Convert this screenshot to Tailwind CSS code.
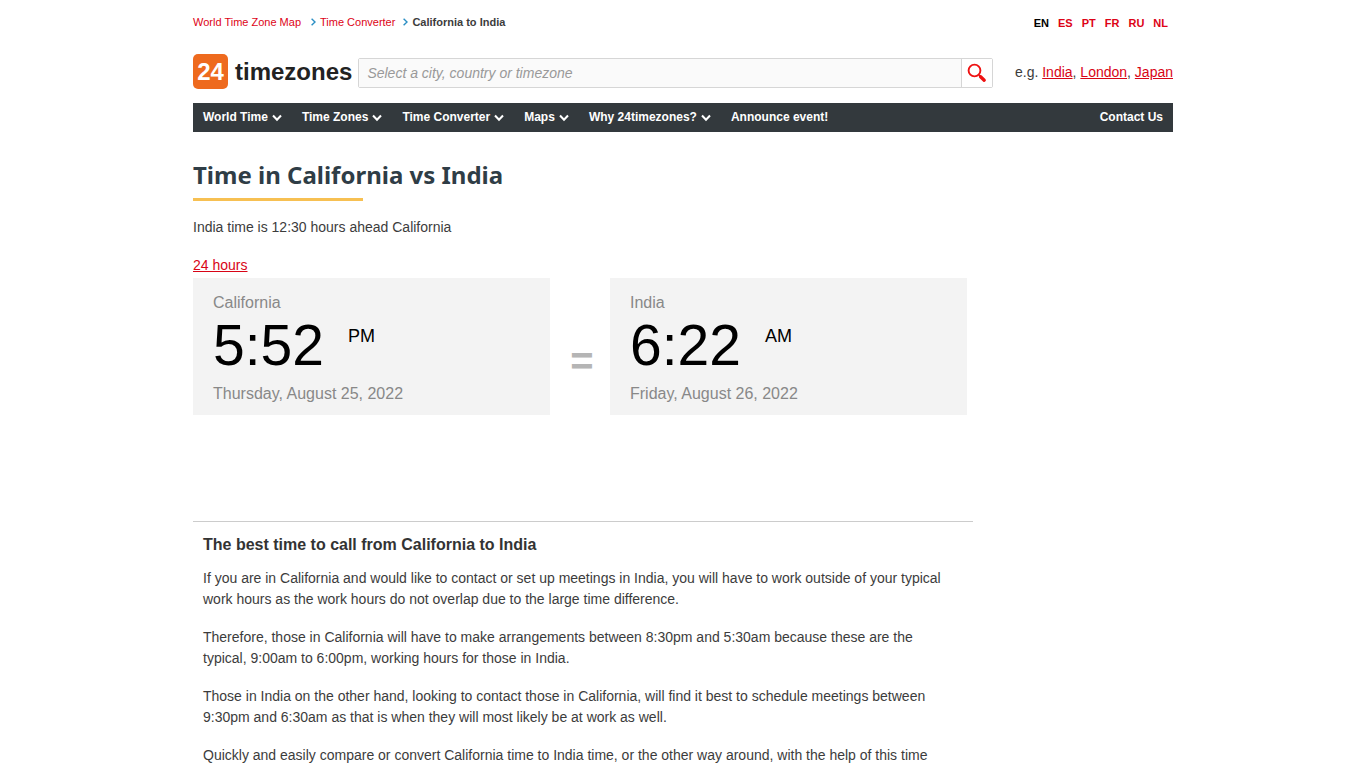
<!DOCTYPE html>
<html lang="en">
<head>
<meta charset="utf-8">
<meta name="viewport" content="width=device-width, initial-scale=1">
<title>Time in California vs India</title>
<script src="https://cdn.jsdelivr.net/npm/@tailwindcss/browser@4"></script>
</head>
<body class="bg-white font-['Liberation_Sans',Arial,sans-serif] text-sm leading-[21px] text-[#3c3c3c]">
<div class="mx-auto max-w-[980px]">
  <header>
    <div class="flex h-11 items-center justify-between">
      <nav aria-label="Breadcrumb" class="flex items-center text-[11px]">
        <a href="#" class="text-[#dd0316]">World Time Zone Map</a>
        <svg class="mr-1 ml-2.5 h-2 w-[5px]" viewBox="0 0 5 8" fill="none" stroke="#2b8fc4" stroke-width="1.4"><path d="M0.6 0.8 4 4 0.6 7.2"/></svg>
        <a href="#" class="text-[#dd0316]">Time Converter</a>
        <svg class="mr-1 ml-2 h-2 w-[5px]" viewBox="0 0 5 8" fill="none" stroke="#2b8fc4" stroke-width="1.4"><path d="M0.6 0.8 4 4 0.6 7.2"/></svg>
        <span class="font-bold text-[#3c3c3c]">California to India</span>
      </nav>
      <nav aria-label="Language" class="flex gap-[9px] pt-0.5 pr-[5px] text-[11px] font-bold text-[#dd0316]">
        <a href="#" class="text-black">EN</a><a href="#">ES</a><a href="#">PT</a><a href="#">FR</a><a href="#">RU</a><a href="#">NL</a>
      </nav>
    </div>
    <div class="flex h-[59px] items-center pb-0.5">
      <a href="#" class="flex items-center gap-[7px] pb-0.5 text-2xl font-bold text-[#222]">
        <span class="flex size-[35px] items-center justify-center rounded-[5px] bg-[#ee6a1e] text-white">24</span>
        <span>timezones</span>
      </a>
      <form class="ml-1.5 flex h-[30px] flex-1 rounded-xs border border-[#d6d6d6]">
        <input type="text" aria-label="City, country or timezone" placeholder="Select a city, country or timezone" class="min-w-0 flex-1 bg-[#fafafa] px-2 pt-0.5 italic outline-none placeholder:text-[#999]">
        <button type="button" aria-label="Search" class="flex w-[31px] items-center justify-center border-l border-[#d6d6d6] bg-white">
          <svg class="size-5" viewBox="0 0 20 20" fill="none" stroke="#ee1111"><circle cx="7.5" cy="7.5" r="5.9" stroke-width="1.9"/><path d="M12 12l2 2" stroke-width="2"/><path d="M13.6 13.8l3.6 3.4" stroke-width="3.4" stroke-linecap="round"/></svg>
        </button>
      </form>
      <p class="ml-[22px]">e.g. <a href="#" class="text-[#d80416] underline">India</a>, <a href="#" class="text-[#d80416] underline">London</a>, <a href="#" class="text-[#d80416] underline">Japan</a></p>
    </div>
    <nav aria-label="Main" class="flex h-[29px] items-center gap-5 bg-[#33393d] px-2.5 pb-0.5 text-xs font-bold text-white">
      <a href="#" class="flex items-center gap-1">World Time <svg class="mt-0.5 h-2 w-2.5" viewBox="0 0 10 8" fill="none" stroke="white" stroke-width="2"><path d="M1 1.5 5 5.8 9 1.5"/></svg></a>
      <a href="#" class="flex items-center gap-1">Time Zones <svg class="mt-0.5 h-2 w-2.5" viewBox="0 0 10 8" fill="none" stroke="white" stroke-width="2"><path d="M1 1.5 5 5.8 9 1.5"/></svg></a>
      <a href="#" class="flex items-center gap-1">Time Converter <svg class="mt-0.5 h-2 w-2.5" viewBox="0 0 10 8" fill="none" stroke="white" stroke-width="2"><path d="M1 1.5 5 5.8 9 1.5"/></svg></a>
      <a href="#" class="flex items-center gap-1">Maps <svg class="mt-0.5 h-2 w-2.5" viewBox="0 0 10 8" fill="none" stroke="white" stroke-width="2"><path d="M1 1.5 5 5.8 9 1.5"/></svg></a>
      <a href="#" class="flex items-center gap-1">Why 24timezones? <svg class="mt-0.5 h-2 w-2.5" viewBox="0 0 10 8" fill="none" stroke="white" stroke-width="2"><path d="M1 1.5 5 5.8 9 1.5"/></svg></a>
      <a href="#">Announce event!</a>
      <a href="#" class="ml-auto">Contact Us</a>
    </nav>
  </header>
  <main class="max-w-[780px] pt-[27px]">
    <h1 class="font-['Noto_Sans',Tahoma,sans-serif] text-2xl leading-8 font-bold text-[#2f3d46]">Time in California vs India</h1>
    <div class="mt-[7px] h-[3px] w-[170px] bg-[#f7c052]"></div>
    <p class="mt-4">India time is 12:30 hours ahead California</p>
    <p class="mt-[17px]"><a href="#" class="text-[#d80416] underline">24 hours</a></p>
    <div class="mt-0.5 mr-1.5 flex items-center">
      <section class="flex-1 bg-[#f3f3f3] px-5 pt-[15px] pb-[9px] text-base text-[#888]">
        <h2 class="leading-5">California</h2>
        <p class="flex items-start gap-6 pb-1 text-black"><span class="text-[57px] leading-[64px]">5:52</span><span class="pt-[11px] text-lg leading-6">PM</span></p>
        <p class="leading-[25px]">Thursday, August 25, 2022</p>
      </section>
      <div class="w-[60px] pt-7 pl-1 text-center text-[40px] leading-10 font-bold text-[#b5b5b5]">=</div>
      <section class="flex-1 bg-[#f3f3f3] px-5 pt-[15px] pb-[9px] text-base text-[#888]">
        <h2 class="leading-5">India</h2>
        <p class="flex items-start gap-6 pb-1 text-black"><span class="text-[57px] leading-[64px]">6:22</span><span class="pt-[11px] text-lg leading-6">AM</span></p>
        <p class="leading-[25px]">Friday, August 26, 2022</p>
      </section>
    </div>
    <section class="mt-[106px] border-t border-[#ccc] pt-3 pr-5 pl-2.5">
      <h2 class="text-base leading-[21px] font-bold text-[#333]">The best time to call from California to India</h2>
      <div class="mt-[13px] space-y-[17px]">
        <p>If you are in California and would like to contact or set up meetings in India, you will have to work outside of your typical work hours as the work hours do not overlap due to the large time difference.</p>
        <p>Therefore, those in California will have to make arrangements between 8:30pm and 5:30am because these are the typical, 9:00am to 6:00pm, working hours for those in India.</p>
        <p>Those in India on the other hand, looking to contact those in California, will find it best to schedule meetings between 9:30pm and 6:30am as that is when they will most likely be at work as well.</p>
        <p>Quickly and easily compare or convert California time to India time, or the other way around, with the help of this time</p>
      </div>
    </section>
  </main>
</div>
</body>
</html>
